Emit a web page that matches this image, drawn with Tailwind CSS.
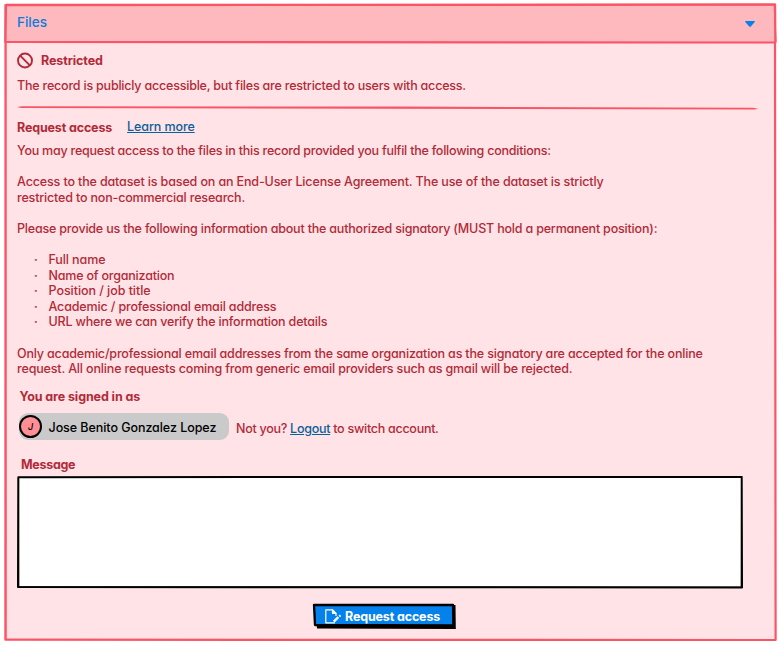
<!DOCTYPE html>
<html lang="en">
<head>
<meta charset="utf-8">
<title>Files</title>
<script src="https://cdn.jsdelivr.net/npm/@tailwindcss/browser@4"></script>
</head>
<body class="bg-white">
<main class="relative isolate w-[779px] h-[646px] overflow-hidden font-[Inter,sans-serif] [font-feature-settings:'cv11'] text-[12.5px] leading-[15.6px] font-medium text-[#b12a38] whitespace-nowrap">
  <!-- hand-drawn panel frame -->
  <svg class="absolute inset-0 -z-10" width="779" height="646" fill="none" stroke="#fa5566" stroke-width="2.2" stroke-linejoin="round">
    <path d="M5.5 5L775 4.6L775.6 640L5.4 639.7Z" fill="#ffe3e6"/>
    <path d="M6 5.2L775 4.6L775.3 42.5L5.3 42Z" fill="#fdb9bd"/>
    <path d="M6 6L6.6 639L775 640.4" stroke-width="1" opacity=".6"/>
    <path d="M6 4L774 5.3L776.4 42" stroke-width="1" opacity=".6"/>
  </svg>
  <header class="flex h-[43px] items-center justify-between pl-[17px] pr-[24px] pt-[2px] text-[#0a7ce0]">
    <h1 class="text-[13.5px] font-medium">Files</h1>
    <svg width="10" height="6" class="mt-[3px]" fill="#0582eb"><path d="M0 .8Q0 0 1 0H9Q10 0 10 .8L5.8 5.5Q5 6.2 4.2 5.5Z"/></svg>
  </header>
  <section class="pl-[17px]">
    <div class="flex h-[35px] items-center gap-[8px]">
      <svg width="16" height="17" fill="none" stroke="#b12a38" stroke-width="1.9"><circle cx="8" cy="8.5" r="7"/><path d="M3.2 3.7L12.8 13.4"/></svg>
      <h2 class="font-bold tracking-[-0.1px]">Restricted</h2>
    </div>
    <p class="tracking-[-0.205px]">The record is publicly accessible, but files are restricted to users with access.</p>
    <svg class="mt-[12px] block" width="742" height="5" fill="#fa5566"><path d="M0 1L5 .3L380 .6L736 1.7L741 2.8L738 3.6L360 2.8L4 2Z"/></svg>
  </section>
  <section class="pl-[17px] pt-[9px]">
    <div class="flex gap-[15px]">
      <h2 class="font-bold tracking-[-0.15px]">Request access</h2>
      <a class="-mt-px mb-px tracking-[-0.1px] text-[#0a6199] underline">Learn more</a>
    </div>
    <div class="mt-[7.55px]">
      <p class="tracking-[-0.225px]">You may request access to the files in this record provided you fulfil the following conditions:</p>
      <p class="mt-[15.6px] tracking-[-0.135px]">Access to the dataset is based on an End-User License Agreement. The use of the dataset is strictly<br><span class="tracking-[-0.17px]">restricted to non-commercial research.</span></p>
      <p class="mt-[15.6px] tracking-[-0.19px]">Please provide us the following information about the authorized signatory (MUST hold a permanent position):</p>
      <ul class="mt-[15.6px] pl-[17px]">
        <li class="flex"><span class="w-[14.5px]">·</span><span class="tracking-[-0.1px]">Full name</span></li>
        <li class="flex pt-[0.4px] -mb-[0.4px]"><span class="w-[14.5px]">·</span><span class="tracking-[-0.2px]">Name of organization</span></li>
        <li class="flex"><span class="w-[14.5px]">·</span><span class="tracking-[-0.05px]">Position / job title</span></li>
        <li class="flex"><span class="w-[14.5px]">·</span><span class="tracking-[-0.15px]">Academic / professional email address</span></li>
        <li class="flex"><span class="w-[14.5px]">·</span><span class="tracking-[-0.18px]">URL where we can verify the information details</span></li>
      </ul>
      <p class="mt-[15.8px] tracking-[-0.165px]">Only academic/professional email addresses from the same organization as the signatory are accepted for the online<br><span class="tracking-[-0.15px]">request. All online requests coming from generic email providers such as gmail will be rejected.</span></p>
    </div>
  </section>
  <section class="pl-[19px] pt-[12.3px]">
    <h2 class="pl-[0.5px] font-bold tracking-[-0.1px]">You are signed in as</h2>
    <div class="mt-[8.5px] flex h-[27px] items-center gap-[7px]">
      <div class="flex h-[27px] w-[210px] items-center gap-[6.5px] rounded-[9px] bg-[#cacaca] pt-px text-black">
        <span class="-mt-px flex size-[23px] items-center justify-center rounded-full border-2 border-black bg-[#ff8f94] text-[9px] italic">J</span>
        <span class="pt-[1.5px] tracking-[-0.06px]">Jose Benito Gonzalez Lopez</span>
      </div>
      <p class="pt-[4.5px] tracking-[-0.27px]">Not you? <a class="text-[#0a6199] underline">Logout</a> to switch account.</p>
    </div>
    <label class="mt-[17px] block pl-[2px] font-bold tracking-[-0.3px]" for="message">Message</label>
  </section>
  <div class="relative ml-[17px] mt-[3px] h-[113px] w-[726px]">
    <svg class="absolute inset-0 -z-10" width="726" height="113" fill="none" stroke="black" stroke-width="2" stroke-linejoin="round"><path d="M1.3 1.2L724.7 .9L725 111.5L1 111Z" fill="white"/><path d="M1.6 1.7L2 110.5L724 111L724.5 1.7" stroke-width=".7"/></svg>
    <textarea id="message" class="h-full w-full resize-none bg-transparent p-2"></textarea>
  </div>
  <button class="relative isolate ml-[312px] mt-[14px] flex h-[27px] w-[145px] items-center gap-[4px] pl-[13px] font-bold text-white">
    <svg class="absolute inset-0 -z-10" width="145" height="27"><path d="M3 3L143.5 2L143.8 26L5 25.5Z"/><path d="M2 1.8L141 2L141.3 22.5L3 22Z" fill="#0581eb" stroke="black" stroke-width="2.3" stroke-linejoin="round"/></svg>
    <svg width="16" height="15" fill="none" stroke="white" stroke-width="1.2" stroke-linejoin="round"><path d="M11 7V4.3L7.5.8H.8V13.8H10"/><path d="M7.5 .8V4.3H11Z" fill="white"/><path d="M8.8 12.7L13.3 8.2" stroke-width="2.4"/><path d="M14.2 7.5L15.5 6.2" stroke-width="2.2"/></svg>
    <span class="pt-px tracking-[-0.15px]">Request access</span>
  </button>
</main>
</body>
</html>
